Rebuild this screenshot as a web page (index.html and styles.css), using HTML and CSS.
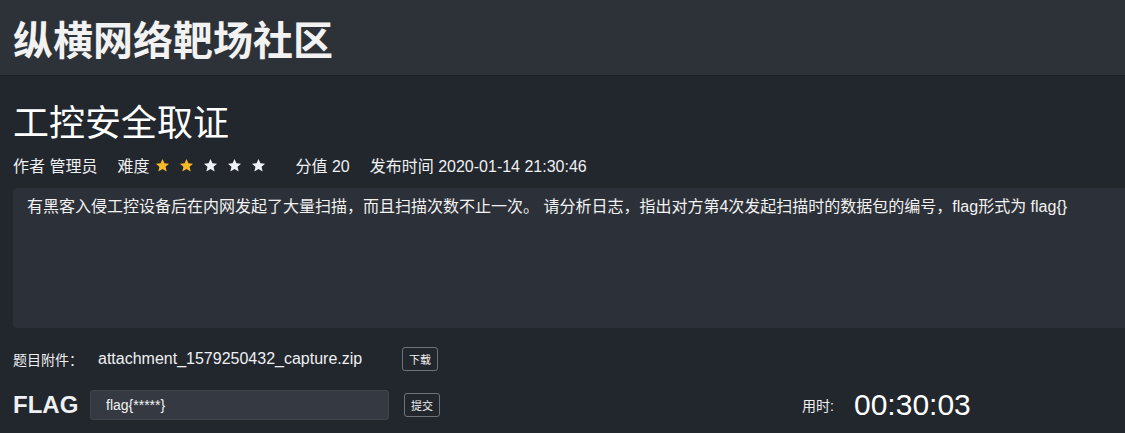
FILE: index.html
```html
<!DOCTYPE html>
<html lang="zh">
<head>
<meta charset="utf-8">
<title>工控安全取证</title>
<link rel="stylesheet" href="styles.css">
</head>
<body>
<header class="topbar">
  <h1 class="brand">纵横网络靶场社区</h1>
</header>
<main class="content">
  <h2 class="challenge-title">工控安全取证</h2>
  <div class="meta">
    <span class="meta-item">作者 管理员</span>
    <span class="meta-item rating"><span>难度</span><span class="stars"><svg class="star on" viewBox="0 0 24 24"><path d="M12 1.5l3.1 7 7.4.6-5.6 4.9 1.7 7.4L12 17.5l-6.6 3.9 1.7-7.4L1.5 9.1l7.4-.6z"/></svg><svg class="star on" viewBox="0 0 24 24"><path d="M12 1.5l3.1 7 7.4.6-5.6 4.9 1.7 7.4L12 17.5l-6.6 3.9 1.7-7.4L1.5 9.1l7.4-.6z"/></svg><svg class="star" viewBox="0 0 24 24"><path d="M12 1.5l3.1 7 7.4.6-5.6 4.9 1.7 7.4L12 17.5l-6.6 3.9 1.7-7.4L1.5 9.1l7.4-.6z"/></svg><svg class="star" viewBox="0 0 24 24"><path d="M12 1.5l3.1 7 7.4.6-5.6 4.9 1.7 7.4L12 17.5l-6.6 3.9 1.7-7.4L1.5 9.1l7.4-.6z"/></svg><svg class="star" viewBox="0 0 24 24"><path d="M12 1.5l3.1 7 7.4.6-5.6 4.9 1.7 7.4L12 17.5l-6.6 3.9 1.7-7.4L1.5 9.1l7.4-.6z"/></svg></span></span>
    <span class="meta-item score">分值 20</span>
    <span class="meta-item">发布时间 2020-01-14 21:30:46</span>
  </div>
  <div class="description">有黑客入侵工控设备后在内网发起了大量扫描，而且扫描次数不止一次。 请分析日志，指出对方第4次发起扫描时的数据包的编号，flag形式为 flag{}</div>
  <div class="attachment">
    <span class="label">题目附件：</span>
    <span class="filename">attachment_1579250432_capture.zip</span>
    <button class="btn">下载</button>
  </div>
  <div class="flag-row">
    <span class="flag-label">FLAG</span>
    <input class="flag-input" type="text" placeholder="flag{*****}">
    <button class="btn">提交</button>
    <span class="timer-label">用时:</span>
    <span class="timer">00:30:03</span>
  </div>
</main>
</body>
</html>
```

FILE: styles.css
```css
* { box-sizing: border-box; }
html, body { margin: 0; padding: 0; }
body {
  background: #22262d;
  color: #eef0f2;
  font-family: "Liberation Sans", "Noto Sans CJK SC", sans-serif;
  overflow: hidden;
}
.topbar {
  height: 76px;
  background: #2d3239;
  border-bottom: 1px solid #1b1e23;
  display: flex;
  align-items: center;
  padding-left: 13px;
}
.brand {
  margin: 0;
  font-family: "Noto Sans CJK SC", sans-serif;
  font-size: 40px;
  font-weight: 700;
  color: #f2f2f2;
  line-height: 1;
}
.content {
  padding-left: 13px;
}
.challenge-title {
  margin: 20px 0 0;
  font-family: "Noto Sans CJK SC", sans-serif;
  font-size: 36px;
  font-weight: 400;
  line-height: 48px;
  color: #ffffff;
}
.meta {
  margin-top: 9px;
  display: flex;
  align-items: center;
  height: 24px;
  font-size: 16px;
  color: #eef0f2;
}
.meta-item { margin-right: 20px; display: flex; align-items: center; white-space: nowrap; }
.rating { margin-right: 29px; }
.stars { display: inline-flex; gap: 9px; margin-left: 6px; }
.star { width: 15px; height: 15px; fill: #eff2f7; }
.star.on { fill: #f7ba2a; }
.description {
  margin-top: 11px;
  margin-right: -10px;
  height: 140px;
  background: #2c3038;
  border-radius: 4px;
  padding: 8px 14px;
  font-size: 16px;
  line-height: 22px;
  color: #f2f2f2;
}
.attachment {
  margin-top: 18px;
  display: flex;
  align-items: center;
  height: 26px;
  font-size: 14px;
}
.attachment .label { width: 85px; }
.attachment .filename { width: 304px; font-size: 16px; }
.btn {
  background: transparent;
  border: 1px solid #6e737a;
  border-radius: 3px;
  color: #f2f2f2;
  font-family: "Noto Sans CJK SC", sans-serif;
  font-size: 11px;
  height: 24px;
  width: 36px;
  padding: 0;
  line-height: 22px;
}
.flag-row {
  margin-top: 18px;
  display: flex;
  align-items: center;
  height: 30px;
}
.flag-label {
  font-size: 24px;
  font-weight: 700;
  width: 77px;
}
.flag-input {
  width: 299px;
  height: 30px;
  background: #353a42;
  border: 1px solid #40454d;
  border-radius: 3px;
  color: #f2f2f2;
  font-family: "Liberation Sans", sans-serif;
  font-size: 14px;
  padding: 0 15px;
  margin-right: 15px;
  outline: none;
}
.flag-input::placeholder { color: #f2f2f2; opacity: 1; }
.timer-label {
  margin-left: 362px;
  font-size: 14px;
  width: 52px;
}
.timer {
  font-size: 30px;
  color: #ffffff;
}
```
